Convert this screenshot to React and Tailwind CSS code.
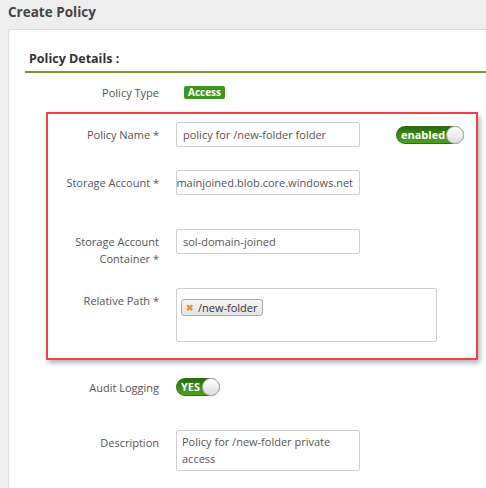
import React from 'react';

const Toggle = ({ label, width }) => (
  <div
    className={`relative h-[18px] rounded-full border border-[#2f6b12] bg-gradient-to-b from-[#2a6a0c] via-[#3d8a17] to-[#4f9e22] ${width}`}
  >
    <span className="absolute left-[4px] top-0 text-[11px] leading-[16px] font-bold text-white">{label}</span>
    <span className="absolute right-[-1px] top-[-1px] w-[18px] h-[18px] rounded-full border border-[#b5b5b5] bg-gradient-to-b from-white to-[#dcdcdc]" />
  </div>
);

const Label = ({ children }) => (
  <div className="w-[111px] shrink-0 text-right text-[11px] leading-[17px] text-[#555]">{children}</div>
);

const App = () => {
  return (
    <div
      className="w-[486px] h-[488px] overflow-hidden bg-[#eeeeee] flex flex-col"
      style={{ fontFamily: '"Open Sans", "Liberation Sans", sans-serif' }}
    >
      <h1 className="pl-2 pt-[2px] h-[29px] text-[13.5px] leading-[20px] font-bold text-[#444]">Create Policy</h1>

      {/* Panel */}
      <div className="ml-2 flex-1 bg-white border-l border-t border-[#dcdcdc] rounded-tl-[3px]">
        <div className="ml-4 mt-[19px] border-b-2 border-[#6a9e31] pb-[3px]">
          <h2 className="pl-1 text-[12.5px] leading-[19px] font-bold text-[#333]">Policy Details :</h2>
        </div>

        {/* Policy Type */}
        <div className="flex items-center mt-[11px] ml-[37px]">
          <div className="w-[113px] text-right text-[11px] leading-[17px] text-[#555]">Policy Type</div>
          <span className="ml-[25px] bg-[#3c961d] text-white text-[10px] leading-[13px] font-bold px-[4px] rounded-[2px]">Access</span>
        </div>

        {/* Highlighted block */}
        <div className="mt-[11px] ml-[37px] mr-[8px] border-2 border-[#f5424a] shadow-[2px_3px_5px_rgba(0,0,0,0.3)] pt-[8px] pb-[16px]">
          <div className="flex items-start">
            <div className="pt-[4px]"><Label>Policy Name *</Label></div>
            <div className="ml-[17px] w-[184px] h-[25px] border border-[#cfcfcf] rounded-[2px] px-[6px] text-[11px] leading-[23px] text-[#555]">
              policy for /new-folder folder
            </div>
            <div className="ml-auto mr-[12px] mt-[4px]">
              <Toggle label="enabled" width="w-[68px]" />
            </div>
          </div>

          <div className="flex items-start mt-[23px]">
            <div className="pt-[4px]"><Label>Storage Account *</Label></div>
            <div className="ml-[17px] w-[184px] h-[25px] border border-[#cfcfcf] rounded-[2px] px-[6px] text-[11px] leading-[23px] text-[#555] overflow-hidden whitespace-nowrap flex justify-end">
              <span className="shrink-0">domainjoined.blob.core.windows.net</span>
            </div>
          </div>

          <div className="flex items-start mt-[34px]">
            <div className="pt-[4px]"><Label>Storage Account Container *</Label></div>
            <div className="ml-[17px] w-[184px] h-[25px] border border-[#cfcfcf] rounded-[2px] px-[6px] text-[11px] leading-[23px] text-[#555]">
              sol-domain-joined
            </div>
          </div>

          <div className="flex items-start mt-[21px]">
            <div className="pt-[4px]"><Label>Relative Path *</Label></div>
            <div className="ml-[17px] w-[261px] h-[54px] border border-[#cfcfcf] rounded-[2px] p-[4px]">
              <span className="inline-flex items-center h-[17px] border border-[#aaa] rounded-[3px] bg-gradient-to-b from-[#f4f4f4] to-[#e4e4e4] px-[4px] text-[11px] text-[#333]">
                <span className="text-[#e8902a] text-[9px] font-bold mr-[4px]">✖</span>
                /new-folder
              </span>
            </div>
          </div>
        </div>

        {/* Audit Logging */}
        <div className="flex items-center mt-[18px] ml-[39px]">
          <Label>Audit Logging</Label>
          <div className="ml-[17px]">
            <Toggle label="YES" width="w-[44px]" />
          </div>
        </div>

        {/* Description */}
        <div className="flex items-start mt-[34px] ml-[39px]">
          <div className="pt-[4px]"><Label>Description</Label></div>
          <div className="ml-[17px] w-[184px] h-[41px] border border-[#cfcfcf] rounded-[2px] px-[5px] pt-[2px] text-[11px] leading-[17px] text-[#555]">
            Policy for /new-folder private access
          </div>
        </div>
      </div>
    </div>
  );
};

export default App;
